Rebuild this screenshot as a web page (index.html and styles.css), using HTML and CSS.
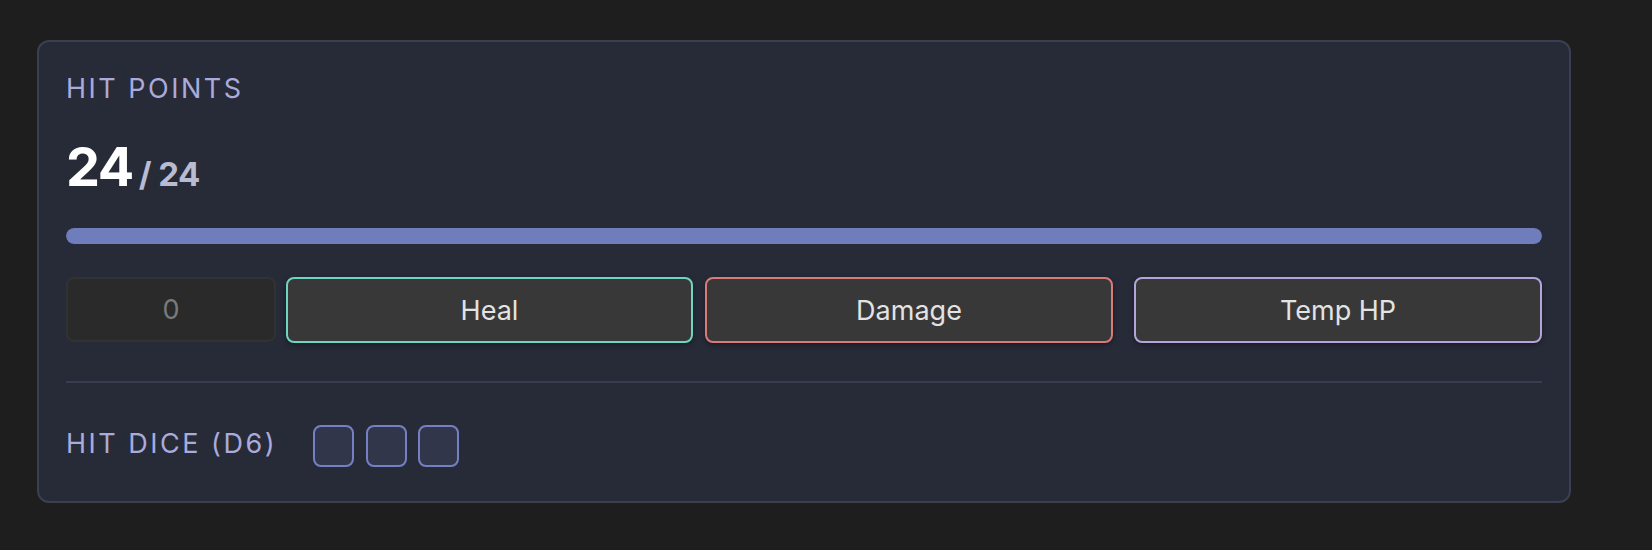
FILE: index.html
```html
<!DOCTYPE html>
<html lang="en">
<head>
<meta charset="utf-8">
<title>Hit Points</title>
<link rel="stylesheet" href="styles.css">
</head>
<body>
  <section class="card">
    <h2 class="label">HIT POINTS</h2>
    <div class="hp">
      <span class="hp-current">24</span>
      <span class="hp-max">/ 24</span>
    </div>
    <div class="bar"><div class="bar-fill" style="width:100%"></div></div>
    <div class="controls">
      <input class="amount" type="text" value="0">
      <button class="btn btn-heal">Heal</button>
      <button class="btn btn-damage">Damage</button>
      <button class="btn btn-temp">Temp HP</button>
    </div>
    <div class="divider"></div>
    <div class="dice-row">
      <span class="label dice-label">HIT DICE (D6)</span>
      <div class="dice">
        <span class="die"></span>
        <span class="die"></span>
        <span class="die"></span>
      </div>
    </div>
  </section>
</body>
</html>
```

FILE: styles.css
```css
* { box-sizing: border-box; }

html, body {
  margin: 0;
  background: #1e1e1e;
}

body {
  padding: 40px 0 0 37px;
  font-family: Inter, "Noto Sans", "Liberation Sans", sans-serif;
}

.card {
  width: 1534px;
  background: #272b38;
  border: 2px solid #3b3f51;
  border-radius: 12px;
  padding: 31px 27px 34px 27px;
}

.label {
  margin: 0;
  font-size: 27px;
  line-height: 32px;
  font-weight: 400;
  letter-spacing: 2.5px;
  color: #aaaadb;
}

.hp {
  margin-top: 35px;
  display: flex;
  align-items: baseline;
  gap: 6px;
  line-height: 1;
}

.hp-current {
  font-size: 54px;
  font-weight: 700;
  letter-spacing: -1.5px;
  color: #ffffff;
}

.hp-max {
  font-size: 33px;
  font-weight: 700;
  letter-spacing: -0.5px;
  color: #b9bbd0;
}

.bar {
  margin-top: 34px;
  height: 16px;
  border-radius: 8px;
  background: #3a3f55;
  overflow: hidden;
}

.bar-fill {
  height: 100%;
  border-radius: 8px;
  background: #6f7dbd;
}

.controls {
  margin-top: 33px;
  display: flex;
  height: 66px;
}

.amount {
  width: 210px;
  height: 65px;
  margin: 0;
  padding: 0;
  background: #2a2a2a;
  border: 2px solid #323232;
  border-radius: 8px;
  color: #7a7a7a;
  font-family: inherit;
  font-size: 27px;
  text-align: center;
  outline: none;
}

.btn {
  width: 408px;
  height: 66px;
  margin: 0;
  padding: 0;
  background: #383838;
  border: 2px solid #888;
  border-radius: 8px;
  color: #e3e3e3;
  font-family: inherit;
  font-size: 27px;
  font-weight: 400;
  box-shadow: 0 2px 5px rgba(0, 0, 0, 0.35);
  cursor: pointer;
}

.btn-heal {
  width: 407px;
  margin-left: 10px;
  border-color: #6fd4c0;
}

.btn-damage {
  margin-left: 12px;
  border-color: #d97a7b;
}

.btn-temp {
  margin-left: 21px;
  border-color: #b4a4dc;
}

.divider {
  margin-top: 38px;
  height: 2px;
  background: #383c4e;
}

.dice-row {
  margin-top: 42px;
  display: flex;
  align-items: flex-start;
  height: 42px;
}

.dice-label {
  margin-top: 3px;
}

.dice {
  margin-left: 36px;
  display: flex;
  gap: 11.5px;
}

.die {
  width: 41px;
  height: 42px;
  background: #31364a;
  border: 2px solid #7580c4;
  border-radius: 8px;
}
```
